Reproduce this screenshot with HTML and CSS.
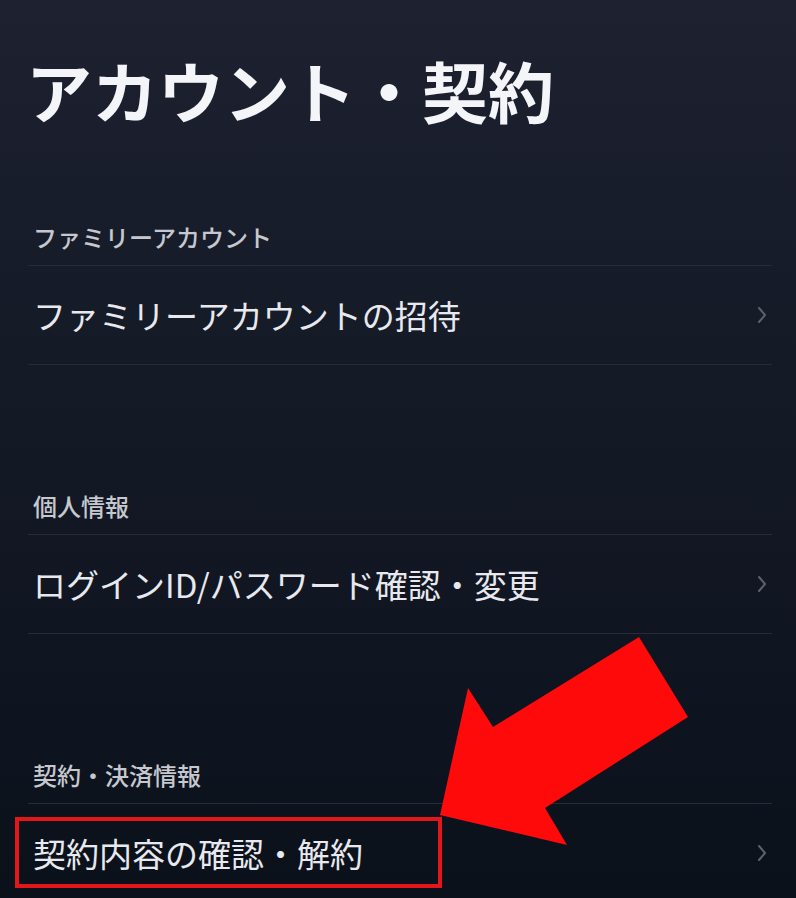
FILE: index.html
```html
<!DOCTYPE html>
<html lang="ja">
<head>
  <meta charset="UTF-8">
  <title>アカウント・契約</title>
  <link rel="stylesheet" href="styles.css">
</head>
<body>
  <main class="screen">
    <h1 class="title">アカウント・契約</h1>

    <section class="group">
      <h2 class="group-label">ファミリーアカウント</h2>
      <a class="row" href="#">
        <span>ファミリーアカウントの招待</span>
        <svg class="chevron" viewBox="0 0 10 18"><polyline points="2,2 8,9 2,16"/></svg>
      </a>
    </section>

    <section class="group">
      <h2 class="group-label">個人情報</h2>
      <a class="row" href="#">
        <span>ログインID/パスワード確認・変更</span>
        <svg class="chevron" viewBox="0 0 10 18"><polyline points="2,2 8,9 2,16"/></svg>
      </a>
    </section>

    <section class="group">
      <h2 class="group-label">契約・決済情報</h2>
      <a class="row" href="#">
        <span>契約内容の確認・解約</span>
        <svg class="chevron" viewBox="0 0 10 18"><polyline points="2,2 8,9 2,16"/></svg>
      </a>
    </section>

    <!-- 注目ポイントの枠と矢印 -->
    <div class="mark-box"></div>
    <svg class="mark-arrow" width="796" height="898" viewBox="0 0 796 898">
      <polygon points="639,637 688,717 545,808 567,845 440,815 468,688 493,727"/>
    </svg>
  </main>
</body>
</html>
```

FILE: styles.css
```css
html, body {
  margin: 0;
  height: 100%;
}

body {
  font-family: "Noto Sans CJK JP", "Noto Sans", sans-serif;
  background: linear-gradient(180deg, #1d2130 0%, #151a27 40%, #0b111b 100%);
  color: #e8e9ee;
  overflow: hidden;
}

.screen {
  position: relative;
  height: 898px;
  padding: 49px 24px 0 28px;
  box-sizing: border-box;
}

.title {
  margin: 0 0 92px -2px;
  font-size: 66px;
  line-height: 80px;
  font-weight: 600;
  color: #f4f5f8;
  letter-spacing: 0;
}

.group + .group {
  margin-top: 125px;
}

.group-label {
  margin: 0;
  padding: 0 5px 12px;
  font-size: 24px;
  line-height: 32px;
  font-weight: 500;
  color: #c6c8cf;
  border-bottom: 1px solid #262b38;
}

.row {
  display: flex;
  align-items: center;
  justify-content: space-between;
  height: 98px;
  padding: 0 5px 0 5px;
  font-size: 33px;
  color: #e8e9ee;
  text-decoration: none;
  border-bottom: 1px solid #262b38;
}

.chevron {
  width: 10px;
  height: 18px;
  fill: none;
  stroke: #5d626d;
  stroke-width: 2;
  stroke-linecap: round;
  stroke-linejoin: round;
}

.mark-box {
  position: absolute;
  left: 15px;
  top: 817px;
  width: 427px;
  height: 71px;
  box-sizing: border-box;
  border: 4px solid #e3161a;
}

.mark-arrow {
  position: absolute;
  left: 0;
  top: 0;
  fill: #ff0a0a;
}
```
